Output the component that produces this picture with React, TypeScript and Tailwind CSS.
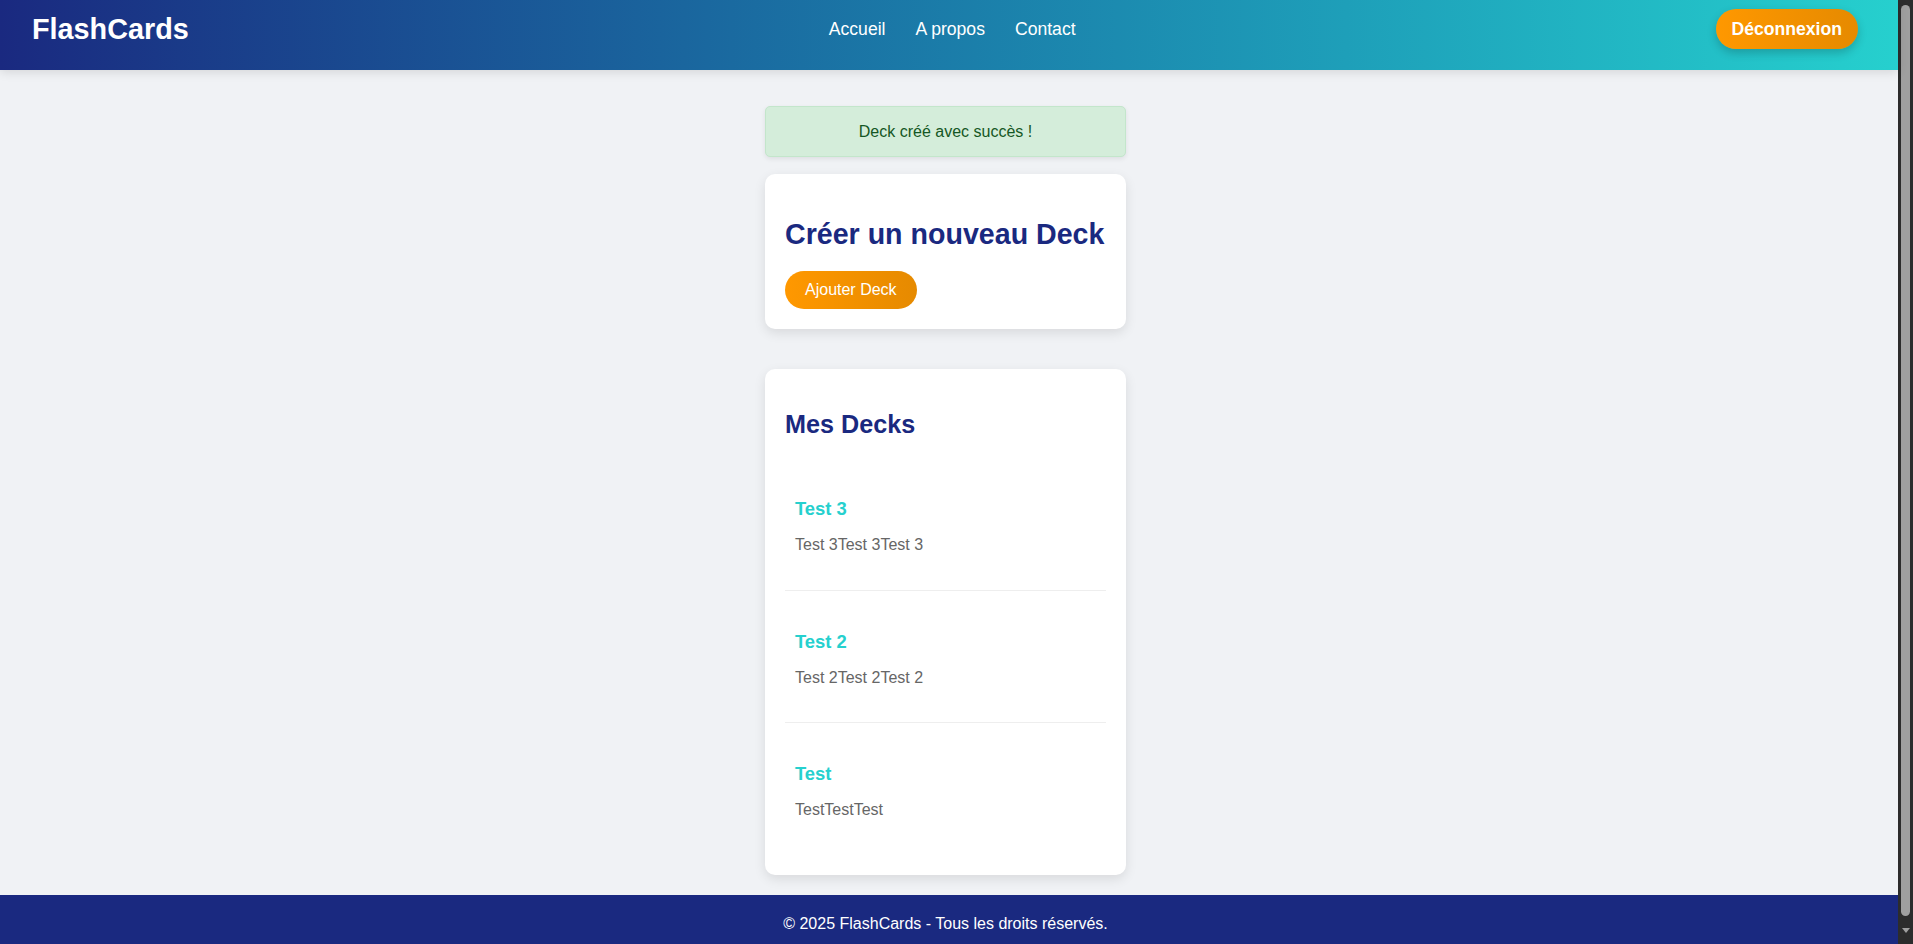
const navLinks = ['Accueil', 'A propos', 'Contact']

const decks = [
  { title: 'Test 3', description: 'Test 3Test 3Test 3' },
  { title: 'Test 2', description: 'Test 2Test 2Test 2' },
  { title: 'Test', description: 'TestTestTest' },
]

function Header() {
  return (
    <header className="relative z-10 flex h-[70px] shrink-0 items-center justify-between bg-linear-to-r from-[#1a2980] to-[#26d0ce] pb-3 pl-8 pr-10 shadow-[0_2px_10px_rgba(0,0,0,0.12)]">
      <span className="text-[28.8px] font-bold leading-none text-white">FlashCards</span>
      <nav className="flex gap-[30px]">
        {navLinks.map((label) => (
          <a key={label} href="#" className="text-[17.6px] leading-5 text-white">
            {label}
          </a>
        ))}
      </nav>
      <button className="h-10 rounded-full bg-linear-to-r from-[#ff9800] to-[#e68a00] px-4 text-[17.6px] font-bold text-white shadow-[0_4px_10px_rgba(0,0,0,0.2)]">
        Déconnexion
      </button>
    </header>
  )
}

function Scrollbar() {
  return (
    <div className="flex w-[15px] shrink-0 flex-col items-center bg-[#2c2c2c] pt-[5px]">
      <div className="w-[9px] flex-1 rounded-full bg-[#9f9f9f]" />
      <div className="flex h-[28px] items-center justify-center">
        <svg width="8" height="5" viewBox="0 0 8 5">
          <path d="M0 0h8L4 5z" fill="#9f9f9f" />
        </svg>
      </div>
    </div>
  )
}

export default function App() {
  return (
    <div className="flex h-[944px] overflow-hidden bg-[#f0f2f5] font-['Liberation_Sans',Arial,sans-serif]">
      <div className="flex min-w-0 flex-1 flex-col">
        <Header />
        <main className="flex justify-center pr-[7px] pt-9">
          <div className="flex w-[361px] flex-col">
            <div className="rounded-[5px] border border-[#c3e6cb] bg-[#d4edda] py-[15px] text-center text-base leading-[19px] text-[#155724] shadow-[0_2px_5px_rgba(0,0,0,0.08)]">
              Deck créé avec succès !
            </div>

            <section className="mt-[17px] flex flex-col rounded-[10px] bg-white p-5 shadow-[0_4px_12px_rgba(0,0,0,0.1)]">
              <h2 className="mt-6 whitespace-nowrap text-[28.6px] font-bold leading-[33px] text-[#1a2980]">
                Créer un nouveau Deck
              </h2>
              <button className="mt-5 self-start rounded-full bg-linear-to-r from-[#ff9800] to-[#e68a00] px-5 py-[10px] text-base leading-[18px] text-white">
                Ajouter Deck
              </button>
            </section>

            <section className="mt-10 flex flex-col rounded-[10px] bg-white p-5 shadow-[0_4px_12px_rgba(0,0,0,0.1)]">
              <h2 className="mb-[19px] mt-[21px] text-[25.2px] font-bold leading-[29px] text-[#1a2980]">
                Mes Decks
              </h2>
              <ul>
                {decks.map((deck, i) => (
                  <li
                    key={deck.title}
                    className={
                      i === decks.length - 1
                        ? 'px-[10px] pb-[35.5px] pt-10'
                        : 'border-b border-[#eeeeee] px-[10px] pb-[35.5px] pt-10'
                    }
                  >
                    <h3 className="text-[18.4px] font-bold leading-[21px] text-[#26d0ce]">{deck.title}</h3>
                    <p className="mt-[17px] text-base leading-[18px] text-[#666666]">{deck.description}</p>
                  </li>
                ))}
              </ul>
            </section>
          </div>
        </main>
        <footer className="mt-5 shrink-0 bg-[#1a2980] py-5 pr-[7px] text-center text-base leading-[18px] text-white">
          © 2025 FlashCards - Tous les droits réservés.
        </footer>
      </div>
      <Scrollbar />
    </div>
  )
}
